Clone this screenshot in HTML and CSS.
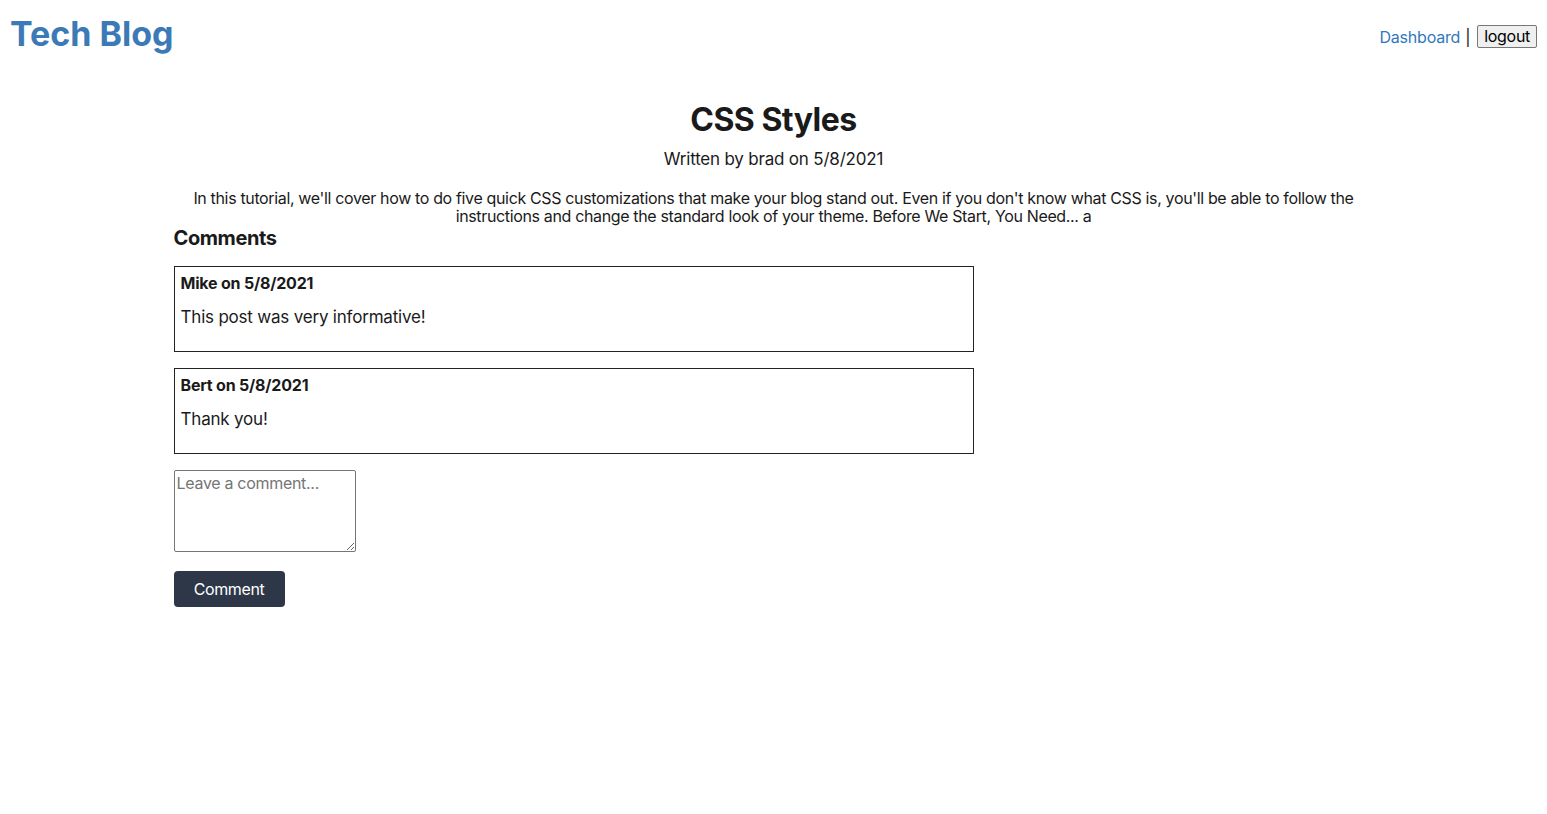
FILE: index.html
```html
<!DOCTYPE html>
<html lang="en">
<head>
<meta charset="utf-8">
<title>Tech Blog</title>
<link rel="stylesheet" href="styles.css">
</head>
<body>
<header class="site-header">
  <a class="brand" href="#">Tech Blog</a>
  <nav class="nav">
    <a class="nav-link" href="#">Dashboard</a>
    <span class="sep">|</span>
    <button class="logout" type="button">logout</button>
  </nav>
</header>
<main class="container">
  <article class="post">
    <h1 class="post-title">CSS Styles</h1>
    <p class="post-meta">Written by brad on 5/8/2021</p>
    <p class="post-body">In this tutorial, we'll cover how to do five quick CSS customizations that make your blog stand out. Even if you don't know what CSS is, you'll be able to follow the instructions and change the standard look of your theme. Before We Start, You Need... a</p>
  </article>
  <section class="comments">
    <h2 class="comments-title">Comments</h2>
    <div class="comment">
      <div class="comment-author">Mike on 5/8/2021</div>
      <p class="comment-text">This post was very informative!</p>
    </div>
    <div class="comment">
      <div class="comment-author">Bert on 5/8/2021</div>
      <p class="comment-text">Thank you!</p>
    </div>
    <form class="comment-form">
      <textarea class="comment-input" placeholder="Leave a comment..."></textarea>
      <button class="comment-btn" type="button">Comment</button>
    </form>
  </section>
</main>
</body>
</html>
```
FILE: styles.css
```css
* { box-sizing: border-box; }
html, body {
  margin: 0;
  padding: 0;
  background: #fff;
}
body {
  font-family: Inter, "Noto Sans", "Liberation Sans", sans-serif;
  color: #1a1a1a;
  font-size: 16px;
  letter-spacing: -0.3px;
}
.site-header {
  display: flex;
  justify-content: space-between;
  align-items: flex-start;
  padding: 12px 10px 0 10px;
}
.brand {
  font-size: 34px;
  font-weight: 700;
  color: #3b7ab6;
  text-decoration: none;
  line-height: 44px;
  letter-spacing: 0;
}
.nav {
  display: flex;
  align-items: center;
  gap: 4px;
  margin-top: 13px;
  font-size: 16px;
}
.nav-link {
  color: #2f78bd;
  text-decoration: none;
  letter-spacing: -0.2px;
}
.sep { color: #111; margin-left: 1px; }
.logout {
  font-family: Inter, "Noto Sans", "Liberation Sans", sans-serif;
  font-size: 16px;
  letter-spacing: -0.3px;
  color: #000;
  background: #efefef;
  border: 1px solid #767676;
  border-radius: 2px;
  padding: 1px 6px;
  height: 23px;
  line-height: 19px;
  margin-left: 3px;
}
.container {
  max-width: 1200px;
  margin: 0 auto;
  padding-top: 44px;
}
.post { text-align: center; }
.post-title {
  font-size: 32px;
  font-weight: 700;
  margin: 0;
  line-height: 40px;
  color: #1a1a1a;
  letter-spacing: -0.5px;
}
.post-meta {
  margin: 0;
  margin-top: 9px;
  font-size: 17px;
  line-height: 20px;
  letter-spacing: -0.2px;
}
.post-body {
  margin: 20px 0 0;
  font-size: 16px;
  line-height: 18px;
  letter-spacing: -0.35px;
}
.comments { padding-top: 1px; }
.comments-title {
  font-size: 20px;
  font-weight: 700;
  margin: 0 0 16px;
  line-height: 24px;
  letter-spacing: -0.4px;
}
.comment {
  width: 800px;
  height: 86px;
  border: 1px solid #222;
  padding: 6px 6px;
  margin-bottom: 16px;
}
.comment-author {
  font-weight: 700;
  font-size: 16px;
  line-height: 20px;
  letter-spacing: -0.2px;
}
.comment-text {
  margin: 13px 0 0;
  font-size: 17px;
  line-height: 22px;
  letter-spacing: -0.2px;
}
.comment-form {
  display: flex;
  flex-direction: column;
  align-items: flex-start;
  gap: 19px;
}
.comment-input {
  width: 182px;
  height: 82px;
  border: 1px solid #767676;
  border-radius: 2px;
  padding: 2px;
  font-family: Inter, "Noto Sans", "Liberation Sans", sans-serif;
  font-size: 16px;
  letter-spacing: -0.3px;
  resize: vertical;
}
.comment-input::placeholder { color: #757575; }
.comment-btn {
  width: 111px;
  height: 36px;
  background: #2d3748;
  color: #fff;
  border: none;
  border-radius: 4px;
  font-family: Inter, "Noto Sans", "Liberation Sans", sans-serif;
  font-size: 16px;
  letter-spacing: -0.4px;
}
```
